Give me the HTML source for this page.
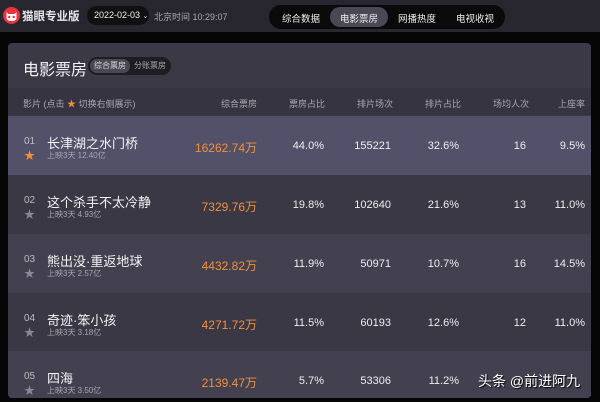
<!DOCTYPE html>
<html><head><meta charset="utf-8"><style>
*{margin:0;padding:0;box-sizing:border-box}
body{width:600px;height:402px;overflow:hidden;background:#050505;font-family:"Liberation Sans","Noto Sans CJK SC",sans-serif;position:relative;color:#fff}
.top{position:absolute;left:0;top:0;width:600px;height:32px;background:#28262e}
.abs{position:absolute;white-space:nowrap}
.panel{position:absolute;left:8px;top:43px;width:583px;height:355px;background:#3b3946;border-radius:4px;overflow:hidden}
.hdr{position:absolute;left:0;top:45px;width:583px;height:27px;background:#363440}
.row{position:absolute;left:0;width:583px;height:59px}
.h{font-size:9px;color:#a9a7b2;top:97px}
.t{font-size:13px;color:#f2f2f2}
.s{font-size:8px;color:#a8a6b0}
.o{font-size:12px;color:#f0913a;text-align:right}
.v{font-size:11px;color:#eee;text-align:right}
.star{font-size:11px;color:#8a8894}
</style></head><body>
<div class="top"></div>
<svg class="abs" style="left:3px;top:7px" width="17" height="17" viewBox="0 0 17 17"><circle cx="8.5" cy="8.5" r="8.5" fill="#e8323c"/><path d="M3.5 5 L5.5 7 H11.5 L13.5 5 V11 Q13.5 14 8.5 14 Q3.5 14 3.5 11Z" fill="#fff"/><circle cx="6.3" cy="10" r="1.2" fill="#e8323c"/><circle cx="10.7" cy="10" r="1.2" fill="#e8323c"/></svg>
<div class="abs" style="left:22px;top:8px;font-size:11.5px;font-weight:bold;color:#e6e6e6">猫眼专业版</div>
<div class="abs" style="left:87px;top:6px;width:62px;height:19px;border-radius:10px;background:#111"></div>
<div class="abs" style="left:94px;top:10px;font-size:9px;color:#eee">2022-02-03 <span style="font-size:7px">⌄</span></div>
<div class="abs" style="left:154px;top:10px;font-size:9px;color:#aaa">北京时间 10:29:07</div>
<div class="abs" style="left:269px;top:5px;width:236px;height:24px;border-radius:12px;background:#0a0a0a"></div>
<div class="abs" style="left:330px;top:7px;width:58px;height:20px;border-radius:10px;background:#4a4855"></div>
<div class="abs" style="left:282px;top:11px;font-size:9.5px;color:#eee">综合数据</div>
<div class="abs" style="left:340px;top:11px;font-size:9.5px;color:#eee">电影票房</div>
<div class="abs" style="left:398px;top:11px;font-size:9.5px;color:#eee">网播热度</div>
<div class="abs" style="left:456px;top:11px;font-size:9.5px;color:#eee">电视收视</div>
<div class="panel">
<div class="hdr"></div>
<div class="row" style="top:73px;background:#53516a"></div>
<div class="row" style="top:132px;background:#3a3845"></div>
<div class="row" style="top:191px;background:#434150"></div>
<div class="row" style="top:250px;background:#3a3845"></div>
<div class="row" style="top:308px;background:#434150"></div>
</div>
<div class="abs" style="left:23px;top:56px;font-size:16px;color:#f2f2f2">电影票房</div>
<div class="abs" style="left:88px;top:57px;width:83px;height:18px;border-radius:9px;background:#1e1d24"></div>
<div class="abs" style="left:90px;top:59px;width:40px;height:14px;border-radius:7px;background:#4a4855"></div>
<div class="abs" style="left:94px;top:60px;font-size:8px;color:#ddd">综合票房</div>
<div class="abs" style="left:134px;top:60px;font-size:8px;color:#aaa">分账票房</div>
<div class="abs h" style="left:23px">影片 (点击 <span style="color:#f0913a">★</span> 切换右侧展示)</div>
<div class="abs h" style="left:221px">综合票房</div>
<div class="abs h" style="left:289px">票房占比</div>
<div class="abs h" style="left:357px">排片场次</div>
<div class="abs h" style="left:425px">排片占比</div>
<div class="abs h" style="left:493px">场均人次</div>
<div class="abs h" style="left:558px">上座率</div>

<div class="abs" style="left:24px;top:136px;font-size:10px;color:#bbb">01</div>
<div class="abs" style="left:24px;top:147px;font-size:11px;color:#f0913a">★</div>
<div class="abs t" style="left:47px;top:133px">长津湖之水门桥</div>
<div class="abs s" style="left:47px;top:150px">上映3天 12.40亿</div>
<div class="abs o" style="left:180px;width:77px;top:139px">16262.74万</div>
<div class="abs v" style="left:270px;width:54px;top:140px">44.0%</div>
<div class="abs v" style="left:330px;width:61px;top:140px">155221</div>
<div class="abs v" style="left:400px;width:59px;top:140px">32.6%</div>
<div class="abs v" style="left:480px;width:46px;top:140px">16</div>
<div class="abs v" style="left:540px;width:45px;top:140px">9.5%</div>

<div class="abs" style="left:24px;top:195px;font-size:10px;color:#bbb">02</div>
<div class="abs star" style="left:24px;top:206px">★</div>
<div class="abs t" style="left:47px;top:192px">这个杀手不太冷静</div>
<div class="abs s" style="left:47px;top:209px">上映3天 4.93亿</div>
<div class="abs o" style="left:180px;width:77px;top:198px">7329.76万</div>
<div class="abs v" style="left:270px;width:54px;top:199px">19.8%</div>
<div class="abs v" style="left:330px;width:61px;top:199px">102640</div>
<div class="abs v" style="left:400px;width:59px;top:199px">21.6%</div>
<div class="abs v" style="left:480px;width:46px;top:199px">13</div>
<div class="abs v" style="left:540px;width:45px;top:199px">11.0%</div>

<div class="abs" style="left:24px;top:254px;font-size:10px;color:#bbb">03</div>
<div class="abs star" style="left:24px;top:265px">★</div>
<div class="abs t" style="left:47px;top:251px">熊出没·重返地球</div>
<div class="abs s" style="left:47px;top:268px">上映3天 2.57亿</div>
<div class="abs o" style="left:180px;width:77px;top:257px">4432.82万</div>
<div class="abs v" style="left:270px;width:54px;top:258px">11.9%</div>
<div class="abs v" style="left:330px;width:61px;top:258px">50971</div>
<div class="abs v" style="left:400px;width:59px;top:258px">10.7%</div>
<div class="abs v" style="left:480px;width:46px;top:258px">16</div>
<div class="abs v" style="left:540px;width:45px;top:258px">14.5%</div>

<div class="abs" style="left:24px;top:313px;font-size:10px;color:#bbb">04</div>
<div class="abs star" style="left:24px;top:324px">★</div>
<div class="abs t" style="left:47px;top:310px">奇迹·笨小孩</div>
<div class="abs s" style="left:47px;top:327px">上映3天 3.18亿</div>
<div class="abs o" style="left:180px;width:77px;top:316px">4271.72万</div>
<div class="abs v" style="left:270px;width:54px;top:317px">11.5%</div>
<div class="abs v" style="left:330px;width:61px;top:317px">60193</div>
<div class="abs v" style="left:400px;width:59px;top:317px">12.6%</div>
<div class="abs v" style="left:480px;width:46px;top:317px">12</div>
<div class="abs v" style="left:540px;width:45px;top:317px">11.0%</div>

<div class="abs" style="left:24px;top:371px;font-size:10px;color:#bbb">05</div>
<div class="abs star" style="left:24px;top:382px">★</div>
<div class="abs t" style="left:47px;top:368px">四海</div>
<div class="abs s" style="left:47px;top:385px">上映3天 3.50亿</div>
<div class="abs o" style="left:180px;width:77px;top:374px">2139.47万</div>
<div class="abs v" style="left:270px;width:54px;top:375px">5.7%</div>
<div class="abs v" style="left:330px;width:61px;top:375px">53306</div>
<div class="abs v" style="left:400px;width:59px;top:375px">11.2%</div>
<div class="abs" style="left:478px;top:371px;font-size:14px;color:#fff;text-shadow:1px 1px 1px #000">头条 @前进阿九</div>
</body></html>
